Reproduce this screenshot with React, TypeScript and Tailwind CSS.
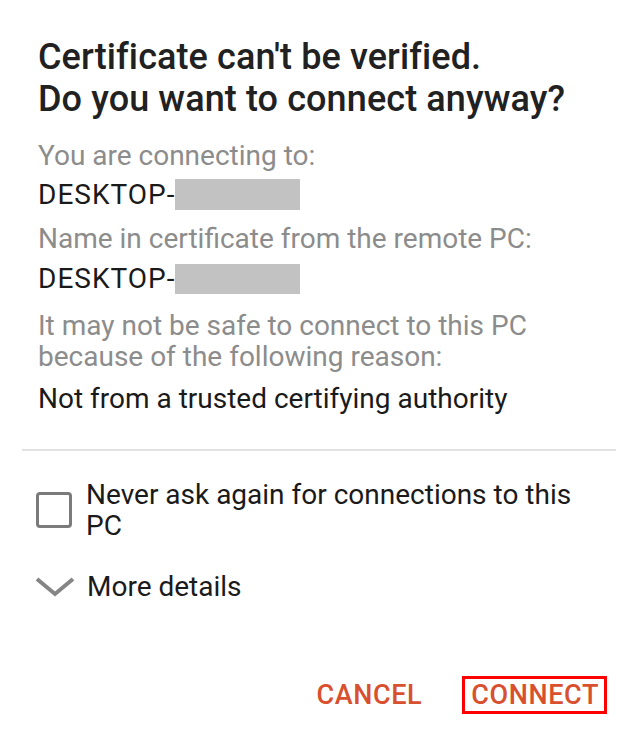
export default function App() {
  return (
    <div className="w-[638px] h-[737px] bg-white font-['Roboto',sans-serif] overflow-hidden">
      <div className="pt-[36px] px-[38px]">
        <h1 className="text-[36px] leading-[42px] font-medium text-[#212121] tracking-[0.1px]">
          Certificate can't be verified.
          <br />
          Do you want to connect anyway?
        </h1>

        <div className="mt-[20px] text-[28px] leading-[31px]">
          <p className="text-[#8c8c8c]">You are connecting to:</p>
          <p className="mt-[8px] flex items-center text-[#1a1a1a]">
            <span className="tracking-[1px]">DESKTOP-</span>
            <span className="inline-block w-[125px] h-[31px] bg-[#c2c2c2]" />
          </p>
          <p className="mt-[13px] text-[#8c8c8c]">Name in certificate from the remote PC:</p>
          <p className="mt-[9px] flex items-center text-[#1a1a1a]">
            <span className="tracking-[1px]">DESKTOP-</span>
            <span className="inline-block w-[125px] h-[30px] bg-[#c2c2c2]" />
          </p>
          <p className="mt-[16px] text-[#8c8c8c]">
            It may not be safe to connect to this PC
            <br />
            because of the following reason:
          </p>
          <p className="mt-[11px] text-[#1a1a1a]">Not from a trusted certifying authority</p>
        </div>
      </div>

      <div className="mx-[22px] mt-[35px] h-[2px] bg-[#e2e2e2]" />

      <div className="px-[36px] text-[28px] leading-[31px] text-[#1a1a1a]">
        <label className="mt-[28px] flex items-center gap-[14px]">
          <span className="shrink-0 w-[36px] h-[36px] rounded-[4px] border-[3px] border-[#7b7b7b]" />
          <span className="pr-[20px]">Never ask again for connections to this PC</span>
        </label>

        <div className="mt-[30px] flex items-center gap-[12px]">
          <svg width="40" height="22" viewBox="0 0 40 22" className="shrink-0 -ml-[1px]">
            <path d="M2 3 L20 18 L38 3" fill="none" stroke="#858585" strokeWidth="4" />
          </svg>
          <span>More details</span>
        </div>
      </div>

      <div className="mt-[74px] flex justify-end items-center gap-[40px] pr-[31px] text-[27px] font-medium tracking-[0.6px] text-[#d8502e]">
        <button className="leading-[30px]">CANCEL</button>
        <button className="leading-[30px] border-[3px] border-[#ff0000] pl-[6px] pr-[5px] py-[1px]">CONNECT</button>
      </div>
    </div>
  );
}
